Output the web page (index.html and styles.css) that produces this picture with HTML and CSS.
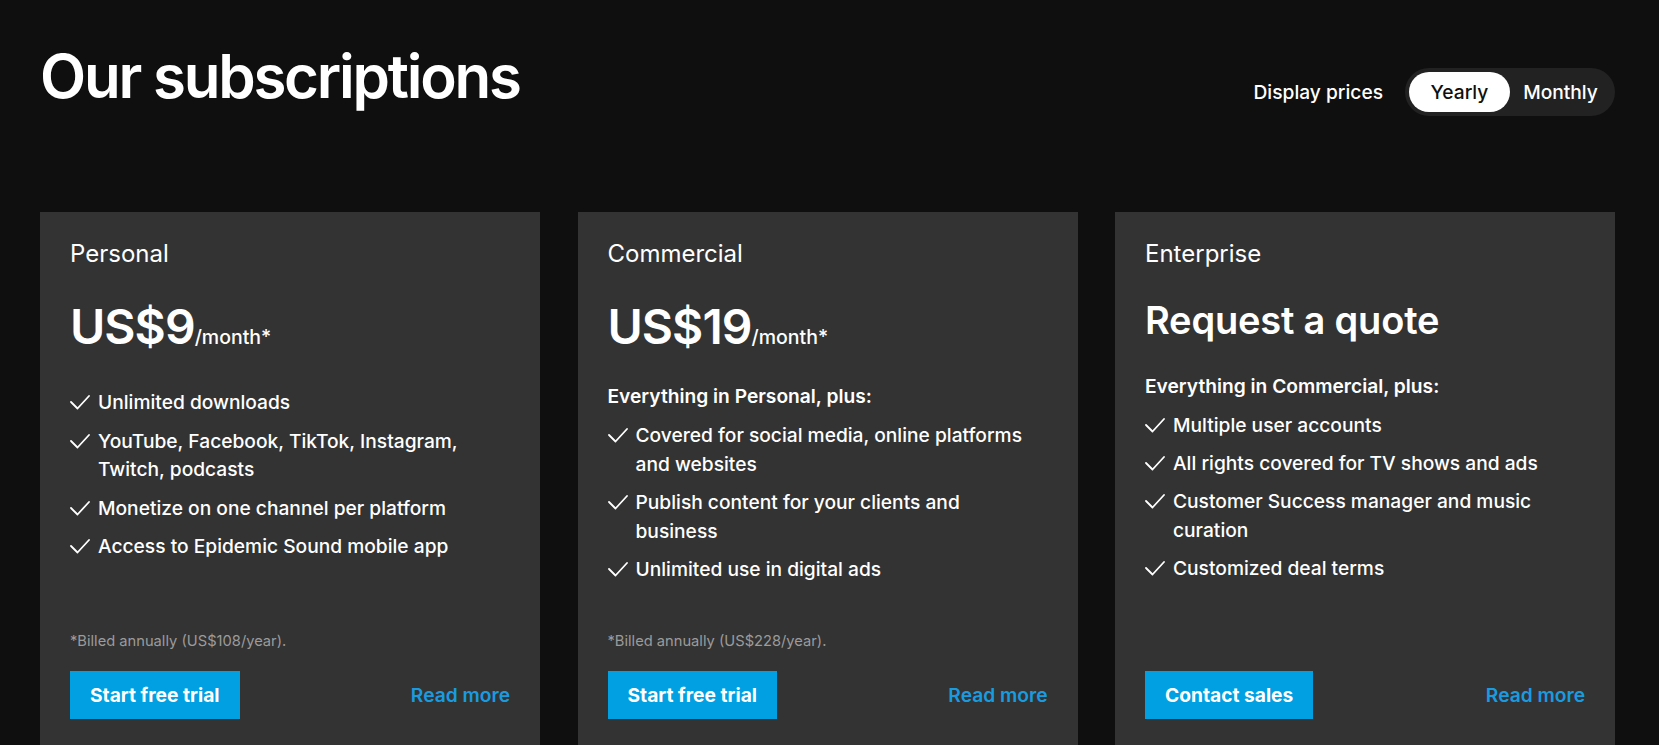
FILE: index.html
```html
<!DOCTYPE html>
<html lang="en">
<head>
<meta charset="utf-8">
<title>Our subscriptions</title>
<link rel="stylesheet" href="styles.css">
</head>
<body>
<main class="page">
  <header class="header">
    <h1 class="title">Our subscriptions</h1>
    <div class="display">
      <span class="display-label">Display prices</span>
      <div class="toggle">
        <button class="toggle-opt is-active">Yearly</button>
        <button class="toggle-opt">Monthly</button>
      </div>
    </div>
  </header>

  <section class="plans">
    <article class="plan">
      <h2 class="plan-name">Personal</h2>
      <div class="price">US$9<span class="per">/month*</span></div>
      <ul class="features">
        <li class="feature"><svg class="check" viewBox="0 0 20 16" width="20" height="16"><path d="M1 8 L7.5 14.5 L19 2"/></svg><span>Unlimited downloads</span></li>
        <li class="feature"><svg class="check" viewBox="0 0 20 16" width="20" height="16"><path d="M1 8 L7.5 14.5 L19 2"/></svg><span>YouTube, Facebook, TikTok, Instagram, Twitch, podcasts</span></li>
        <li class="feature"><svg class="check" viewBox="0 0 20 16" width="20" height="16"><path d="M1 8 L7.5 14.5 L19 2"/></svg><span>Monetize on one channel per platform</span></li>
        <li class="feature"><svg class="check" viewBox="0 0 20 16" width="20" height="16"><path d="M1 8 L7.5 14.5 L19 2"/></svg><span>Access to Epidemic Sound mobile app</span></li>
      </ul>
      <div class="plan-foot">
        <p class="billed">*Billed annually (US$108/year).</p>
        <div class="actions">
          <a class="btn" href="#">Start free trial</a>
          <a class="more" href="#">Read more</a>
        </div>
      </div>
    </article>

    <article class="plan">
      <h2 class="plan-name">Commercial</h2>
      <div class="price">US$19<span class="per">/month*</span></div>
      <p class="plus">Everything in Personal, plus:</p>
      <ul class="features">
        <li class="feature"><svg class="check" viewBox="0 0 20 16" width="20" height="16"><path d="M1 8 L7.5 14.5 L19 2"/></svg><span>Covered for social media, online platforms and websites</span></li>
        <li class="feature"><svg class="check" viewBox="0 0 20 16" width="20" height="16"><path d="M1 8 L7.5 14.5 L19 2"/></svg><span>Publish content for your clients and business</span></li>
        <li class="feature"><svg class="check" viewBox="0 0 20 16" width="20" height="16"><path d="M1 8 L7.5 14.5 L19 2"/></svg><span>Unlimited use in digital ads</span></li>
      </ul>
      <div class="plan-foot">
        <p class="billed">*Billed annually (US$228/year).</p>
        <div class="actions">
          <a class="btn" href="#">Start free trial</a>
          <a class="more" href="#">Read more</a>
        </div>
      </div>
    </article>

    <article class="plan">
      <h2 class="plan-name">Enterprise</h2>
      <div class="quote">Request a quote</div>
      <p class="plus">Everything in Commercial, plus:</p>
      <ul class="features">
        <li class="feature"><svg class="check" viewBox="0 0 20 16" width="20" height="16"><path d="M1 8 L7.5 14.5 L19 2"/></svg><span>Multiple user accounts</span></li>
        <li class="feature"><svg class="check" viewBox="0 0 20 16" width="20" height="16"><path d="M1 8 L7.5 14.5 L19 2"/></svg><span>All rights covered for TV shows and ads</span></li>
        <li class="feature"><svg class="check" viewBox="0 0 20 16" width="20" height="16"><path d="M1 8 L7.5 14.5 L19 2"/></svg><span>Customer Success manager and music curation</span></li>
        <li class="feature"><svg class="check" viewBox="0 0 20 16" width="20" height="16"><path d="M1 8 L7.5 14.5 L19 2"/></svg><span>Customized deal terms</span></li>
      </ul>
      <div class="plan-foot">
        <div class="actions">
          <a class="btn" href="#">Contact sales</a>
          <a class="more" href="#">Read more</a>
        </div>
      </div>
    </article>
  </section>
</main>
</body>
</html>
```

FILE: styles.css
```css
* {
  box-sizing: border-box;
}

html, body {
  margin: 0;
  padding: 0;
  background: #0f0f0f;
  color: #ffffff;
  font-family: Inter, "Noto Sans", "Liberation Sans", sans-serif;
}

.page {
  padding: 40px 44px 0 40px;
}

.header {
  display: flex;
  justify-content: space-between;
  align-items: flex-start;
  margin-bottom: 96px;
}

.title {
  margin: 0;
  font-size: 60px;
  line-height: 72px;
  font-weight: 600;
  letter-spacing: -0.037em;
}

.display {
  display: flex;
  align-items: center;
  gap: 22px;
  margin-top: 28px;
}

.display-label {
  font-size: 19.2px;
  line-height: 28.8px;
  font-weight: 500;
}

.toggle {
  display: flex;
  padding: 4px;
  background: #222222;
  border-radius: 24px;
}

.toggle-opt {
  width: 101px;
  height: 40px;
  border: 0;
  border-radius: 20px;
  background: transparent;
  color: #ffffff;
  font-family: inherit;
  font-size: 19.2px;
  font-weight: 500;
  padding: 0;
  cursor: pointer;
}

.toggle-opt.is-active {
  background: #ffffff;
  color: #0f0f0f;
}

.plans {
  display: grid;
  grid-template-columns: repeat(3, 1fr);
  gap: 37.5px;
}

.plan {
  display: flex;
  flex-direction: column;
  min-height: 533px;
  padding: 28px 30px 26px 30px;
  background: #333333;
}

.plan-name {
  margin: 0;
  font-size: 24px;
  line-height: 28.8px;
  font-weight: 400;
}

.price {
  margin-top: 34.5px;
  font-size: 48px;
  line-height: 48px;
  font-weight: 600;
  letter-spacing: -0.02em;
}

.per {
  font-size: 19.5px;
  line-height: 20px;
  font-weight: 500;
  letter-spacing: 0;
}

.quote {
  margin-top: 30px;
  font-size: 38px;
  line-height: 42px;
  font-weight: 600;
  letter-spacing: -0.005em;
}

.plus {
  margin: 31px 0 0 0;
  font-size: 19.2px;
  line-height: 28.8px;
  font-weight: 600;
}

.features {
  list-style: none;
  margin: 37px 0 0 0;
  padding: 0 10px 0 0;
  display: flex;
  flex-direction: column;
  gap: 9.5px;
}

.plus + .features {
  margin-top: 10px;
}

.feature {
  display: flex;
  align-items: flex-start;
  gap: 8px;
  font-size: 19.2px;
  line-height: 28.8px;
  font-weight: 500;
}

.check {
  flex: none;
  margin-top: 6px;
  fill: none;
  stroke: #ffffff;
  stroke-width: 1.8;
  stroke-linecap: round;
  stroke-linejoin: round;
}

.plan-foot {
  margin-top: auto;
}

.billed {
  margin: 0 0 19px 0;
  font-size: 14.7px;
  line-height: 21px;
  color: #9b9b9b;
}

.actions {
  display: flex;
  justify-content: space-between;
  align-items: center;
}

.btn {
  display: inline-block;
  padding: 9.6px 20px;
  background: #00a0e3;
  color: #ffffff;
  font-size: 19.2px;
  line-height: 28.8px;
  font-weight: 700;
  text-decoration: none;
}

.more {
  color: #1a9be0;
  font-size: 19.2px;
  line-height: 28.8px;
  font-weight: 600;
  text-decoration: none;
}
```
